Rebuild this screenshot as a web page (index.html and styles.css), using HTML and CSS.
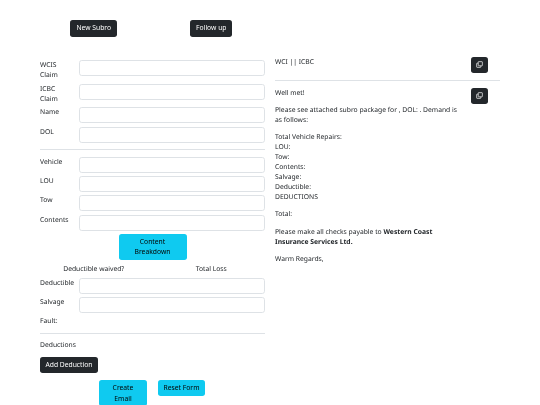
FILE: index.html
```html
<!DOCTYPE html>
<html lang="en">
<head>
<meta charset="utf-8">
<title>Subro</title>
<link rel="stylesheet" href="styles.css">
</head>
<body>
<div class="page">
  <div class="top">
    <div class="top-cell"><button class="btn dark">New Subro</button></div>
    <div class="top-cell"><button class="btn dark">Follow up</button></div>
  </div>
  <div class="columns">
    <form class="left">
      <div class="row tall"><label>WCIS Claim</label><input></div>
      <div class="row tall"><label>ICBC Claim</label><input></div>
      <div class="row"><label>Name</label><input></div>
      <div class="row"><label>DOL</label><input></div>
      <hr class="rule">
      <div class="row"><label>Vehicle</label><input></div>
      <div class="row"><label>LOU</label><input></div>
      <div class="row"><label>Tow</label><input></div>
      <div class="row"><label>Contents</label><input></div>
      <div class="center"><button type="button" class="btn cyan breakdown">Content Breakdown</button></div>
      <div class="checks"><span>Deductible waived?</span><span>Total Loss</span></div>
      <div class="row"><label>Deductible</label><input></div>
      <div class="row"><label>Salvage</label><input></div>
      <div class="fault">Fault:</div>
      <hr class="rule thick">
      <div class="deductions">Deductions</div>
      <button type="button" class="btn dark add">Add Deduction</button>
      <div class="actions">
        <button type="button" class="btn cyan create">Create Email</button>
        <button type="button" class="btn cyan reset">Reset Form</button>
      </div>
    </form>
    <section class="right">
      <div class="mail-row subject">
        <p class="mail-text">WCI || ICBC</p>
        <button class="btn dark icon" aria-label="Copy"><svg viewBox="0 0 16 16" width="7" height="7"><path fill="none" stroke="currentColor" stroke-width="1.6" d="M6 1.5h7.5a1 1 0 0 1 1 1V10a1 1 0 0 1-1 1H6a1 1 0 0 1-1-1V2.500a1 1 0 0 1 1-1zM5 5H2.500a1 1 0 0 0-1 1v7.500a1 1 0 0 0 1 1H10a1 1 0 0 0 1-1V11"/></svg></button>
      </div>
      <hr class="rule mail-rule">
      <div class="mail-row">
        <div class="mail-text">
          <p>Well met!</p>
          <p>Please see attached subro package for , DOL: . Demand is as follows:</p>
          <p>Total Vehicle Repairs:<br>LOU:<br>Tow:<br>Contents:<br>Salvage:<br>Deductible:<br>DEDUCTIONS</p>
          <p>Total:</p>
          <p>Please make all checks payable to <b>Western Coast Insurance Services Ltd.</b></p>
          <p>Warm Regards,</p>
        </div>
        <button class="btn dark icon" aria-label="Copy"><svg viewBox="0 0 16 16" width="7" height="7"><path fill="none" stroke="currentColor" stroke-width="1.6" d="M6 1.5h7.5a1 1 0 0 1 1 1V10a1 1 0 0 1-1 1H6a1 1 0 0 1-1-1V2.500a1 1 0 0 1 1-1zM5 5H2.500a1 1 0 0 0-1 1v7.500a1 1 0 0 0 1 1H10a1 1 0 0 0 1-1V11"/></svg></button>
      </div>
    </section>
  </div>
</div>
</body>
</html>
```
FILE: styles.css
```css
* { box-sizing: border-box; }
html, body { margin: 0; height: 405px; overflow: hidden; background: #fff; }
body { font: 6.75px/10.1px "Noto Sans", sans-serif; color: #212529; text-rendering: geometricPrecision; }
.page { padding: 20px 40px 0; height: 405px; opacity: 0.99; filter: blur(0.3px); will-change: filter; }
.top { display: grid; grid-template-columns: 1fr 1fr; gap: 10px; width: 225px; height: 36.500px; }
.top-cell { text-align: center; }
.columns { display: grid; grid-template-columns: 225px 225px; gap: 10px; }
.left { padding-top: 3.500px; }
.btn { font: inherit; border: 1px solid transparent; border-radius: 2.700px; padding: 2px 5px; height: 16.500px; }
.dark { background: #212529; color: #fff; }
.cyan { background: #0dcaf0; color: #000; }
.row { display: flex; margin-bottom: 3.300px; }
.row.tall { margin-bottom: 3.500px; }
.row label { width: 39px; flex: none; padding-right: 10px; }
.row input { flex: 1; min-width: 0; height: 16px; border: 1px solid #dee2e6; border-radius: 2.700px; background: #fff; padding: 0; }
.rule { border: 0; border-top: 1px solid #dee2e6; margin: 6.700px 0 6.300px; }
.thick { margin: 7px 0 6px; }
.center { display: flex; justify-content: center; padding-top: 0.500px; }
.breakdown { width: 68px; height: 26px; }
.checks { display: grid; grid-template-columns: 1fr 1fr; gap: 10px; text-align: center; margin: 4px 0 3.300px; }
.fault { height: 10px; }
.deductions { margin-bottom: 7px; }
.add { display: block; width: 58px; padding: 2px 0; height: 16px; }
.actions { display: flex; align-items: flex-start; gap: 11px; padding: 7px 0 0 59px; }
.create { width: 48px; height: 26px; }
.reset { width: 47px; height: 16px; padding: 0; }
.mail-row { display: flex; justify-content: space-between; align-items: flex-start; padding-right: 12px; }
.mail-text { width: 186px; margin: 0; }
.mail-text p { margin: 0 0 7px; }
p.mail-text { margin: 0; }
.subject { height: 23.500px; }
.mail-rule { margin: 0 0 6.500px; }
.icon { width: 17px; height: 16.500px; padding: 0; display: flex; align-items: center; justify-content: center; }
```
